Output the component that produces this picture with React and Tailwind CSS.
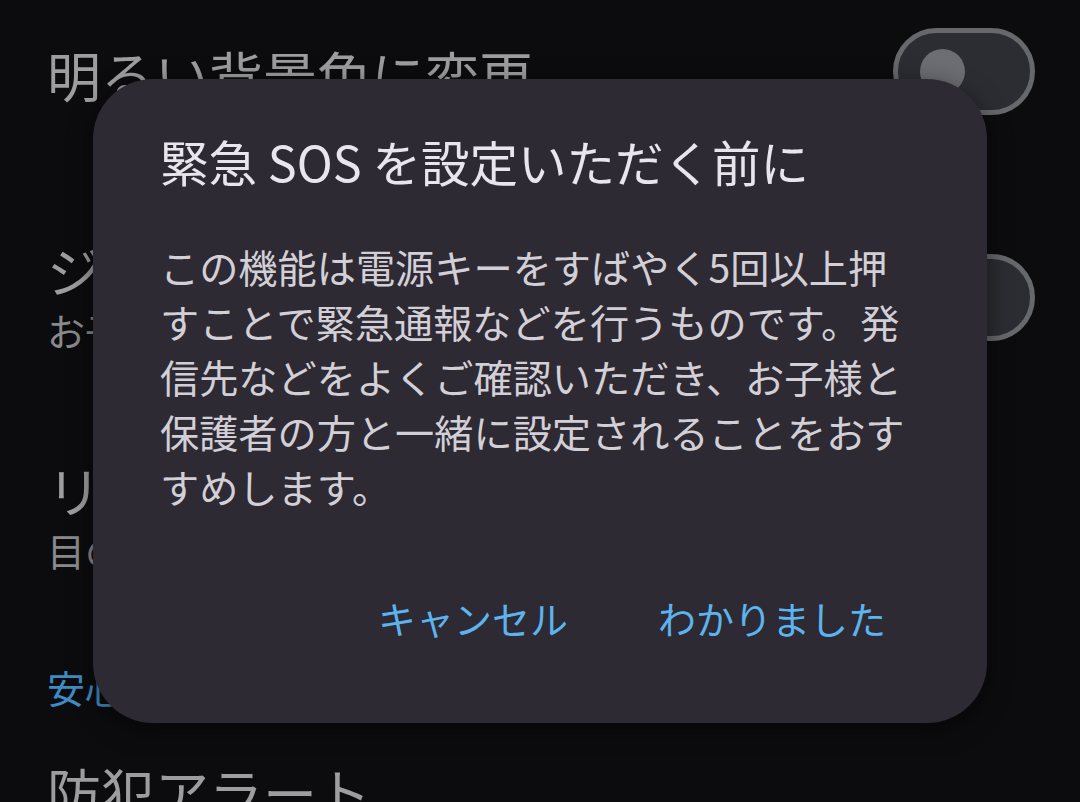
import React from 'react';

const FONT = { fontFamily: '"Noto Sans CJK JP", "Noto Sans", sans-serif' };

const Toggle = () => (
    <div className="w-[142px] h-[87px] rounded-full border-[5px] border-[#66686c] bg-[#2b2d32] flex items-center pl-[22px] shrink-0">
        <div className="w-[45px] h-[45px] rounded-full bg-[#6c6e73]" />
    </div>
);

const SettingRow = ({ title, sub, toggle, className }) => (
    <div className={`flex items-center justify-between pl-[47px] pr-[45px] ${className}`}>
        <div className="flex flex-col">
            <p className="text-[54px] leading-[60px] text-[#9d9d9f]">{title}</p>
            {sub && <p className="mt-[5px] text-[38px] leading-[50px] text-[#8a8a8c]">{sub}</p>}
        </div>
        {toggle && <Toggle />}
    </div>
);

export default function App() {
    return (
        <div className="relative w-[1080px] h-[802px] overflow-hidden bg-[#0c0c0f]" style={FONT}>
            {/* settings list behind the dialog */}
            <div className="flex flex-col">
                <div className="flex items-start justify-between pl-[47px] pr-[45px] pt-[28px] h-[150px]">
                    <p className="mt-[17px] text-[54px] leading-[60px] text-[#9d9d9f]">明るい背景色に変更</p>
                    <Toggle />
                </div>
                <SettingRow className="pt-[90px]" title="ジュニア" sub="お子様" toggle />
                <SettingRow className="pt-[105px]" title="リラックス" sub="目の負担" />
                <p className="mt-[87px] pl-[47px] text-[38px] leading-[50px] text-[#3f8cc4]">安心機能</p>
                <p className="mt-[50px] pl-[47px] text-[54px] leading-[60px] text-[#9d9d9f]">防犯アラート</p>
            </div>

            {/* dialog */}
            <div className="absolute left-[93px] top-[79px] w-[894px] h-[644px] rounded-[60px] bg-[#2d2a33] shadow-[0_6px_24px_rgba(0,0,0,0.5)] flex flex-col pl-[67px] pr-[50px] pt-[50px]">
                <h2 className="text-[48.5px] leading-[64px] text-[#e8e6ec]">緊急 SOS を設定いただく前に</h2>
                <p className="mt-[46px] text-[39.2px] leading-[55px] text-[#d2cfd7] whitespace-nowrap">
                    この機能は電源キーをすばやく5回以上押<br />
                    すことで緊急通報などを行うものです。発<br />
                    信先などをよくご確認いただき、お子様と<br />
                    保護者の方と一緒に設定されることをおす<br />
                    すめします。
                </p>
                <div className="mt-auto mb-[80px] flex justify-end gap-[90px] pr-[51px]">
                    <button className="text-[38px] leading-[50px] text-[#5cb3ee]">キャンセル</button>
                    <button className="text-[38px] leading-[50px] text-[#5cb3ee]">わかりました</button>
                </div>
            </div>
        </div>
    );
}
